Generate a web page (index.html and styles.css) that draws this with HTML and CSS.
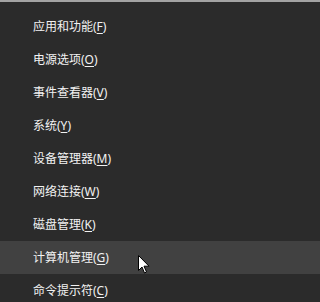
FILE: index.html
```html
<!DOCTYPE html>
<html lang="zh-CN">
<head>
<meta charset="utf-8">
<title>菜单</title>
<link rel="stylesheet" href="styles.css">
</head>
<body>
<ul class="menu">
  <li class="item">应用和功能(<u>F</u>)</li>
  <li class="item">电源选项(<u>O</u>)</li>
  <li class="item">事件查看器(<u>V</u>)</li>
  <li class="item">系统(<u>Y</u>)</li>
  <li class="item">设备管理器(<u>M</u>)</li>
  <li class="item">网络连接(<u>W</u>)</li>
  <li class="item">磁盘管理(<u>K</u>)</li>
  <li class="item active">计算机管理(<u>G</u>)
    <svg class="cursor" width="12" height="19" viewBox="0 0 12 19"><path d="M0.5 0.5 L0.5 15.5 L4 12 L6.5 18 L8.5 17 L6 11.2 L11 11.2 Z" fill="#fff" stroke="#000" stroke-width="1"/></svg>
  </li>
  <li class="item">命令提示符(<u>C</u>)</li>
</ul>
</body>
</html>
```
FILE: styles.css
```css
html, body {
  margin: 0;
  padding: 0;
  background: #2b2b2b;
  height: 100%;
  overflow: hidden;
}
.menu {
  list-style: none;
  margin: 0;
  padding: 8px 0 0 0;
  border-top: 2px solid #a3a3a3;
  font-family: "Noto Sans", "Noto Sans CJK SC", sans-serif;
  font-size: 12px;
  color: #f2f2f2;
}
.item {
  position: relative;
  height: 33px;
  line-height: 33px;
  padding-left: 33px;
  white-space: nowrap;
}
.item u {
  text-decoration: underline;
  text-underline-offset: 2px;
}
.item.active {
  background: #414141;
}
.cursor {
  position: absolute;
  left: 138px;
  top: 14px;
}
```
